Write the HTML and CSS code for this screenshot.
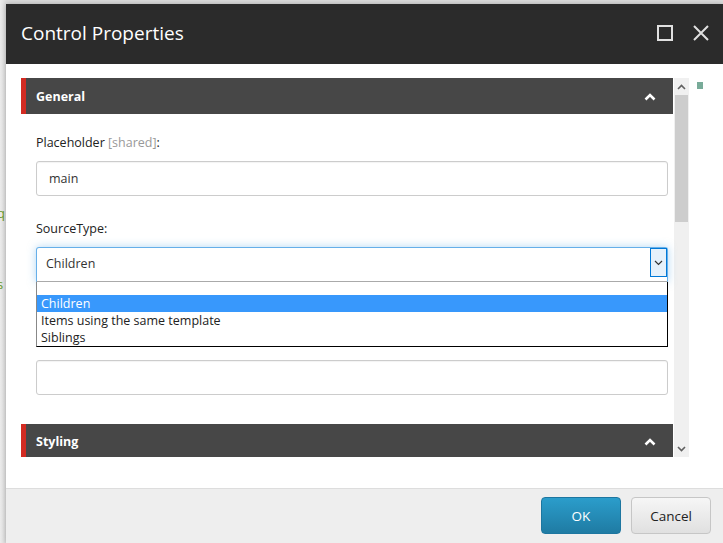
FILE: index.html
```html
<!DOCTYPE html>
<html>
<head>
<meta charset="utf-8">
<title>Control Properties</title>
<link rel="stylesheet" href="styles.css">
</head>
<body>
<div class="backdrop">
  <span class="bg-frag frag-q">q</span>
  <span class="bg-frag frag-s">s</span>
</div>
<div class="dialog">
  <div class="header">
    <div class="title">Control Properties</div>
    <div class="header-icons">
      <svg class="hicon" width="16" height="16" viewBox="0 0 16 16"><rect x="1" y="1" width="14" height="14" fill="none" stroke="#e0e0e0" stroke-width="2"/></svg>
      <svg class="hicon" width="18" height="18" viewBox="0 0 18 18"><path d="M2 2 L16 16 M16 2 L2 16" stroke="#e0e0e0" stroke-width="2" fill="none"/></svg>
    </div>
  </div>
  <div class="body">
    <div class="scroller">
      <div class="content">
        <div class="section-head">
          <span>General</span>
          <svg width="12" height="8" viewBox="0 0 12 8"><path d="M1.5 6.5 L6 2 L10.5 6.5" stroke="#fff" stroke-width="2.6" fill="none"/></svg>
        </div>
        <div class="fields">
          <div class="field">
            <div class="label">Placeholder <span class="muted">[shared]</span>:</div>
            <div class="input">main</div>
          </div>
          <div class="field">
            <div class="label">SourceType:</div>
            <div class="select-wrap">
              <div class="select">
                <span>Children</span>
                <span class="select-btn">
                  <svg width="9" height="6" viewBox="0 0 9 6"><path d="M1 1 L4.5 4.5 L8 1" stroke="#333" stroke-width="1.2" fill="none"/></svg>
                </span>
              </div>
              <div class="options">
                <div class="opt empty"></div>
                <div class="opt sel">Children</div>
                <div class="opt">Items using the same template</div>
                <div class="opt">Siblings</div>
              </div>
            </div>
          </div>
          <div class="field field-gap">
            <div class="label label-hidden">Data Source <span class="sep">|</span> <span class="link">Build query</span> <span class="sep">|</span> <span class="link">Edit query</span> <span class="sep">|</span></div>
            <div class="input"></div>
          </div>
        </div>
        <div class="section-head section-styling">
          <span>Styling</span>
          <svg width="12" height="8" viewBox="0 0 12 8"><path d="M1.5 6.5 L6 2 L10.5 6.5" stroke="#fff" stroke-width="2.6" fill="none"/></svg>
        </div>
      </div>
      <div class="scrollbar">
        <div class="sb-btn">
          <svg width="9" height="6" viewBox="0 0 9 6"><path d="M1 5 L4.5 1.5 L8 5" stroke="#606060" stroke-width="1.6" fill="none"/></svg>
        </div>
        <div class="sb-thumb"></div>
        <div class="sb-track"></div>
        <div class="sb-btn">
          <svg width="9" height="6" viewBox="0 0 9 6"><path d="M1 1 L4.5 4.5 L8 1" stroke="#606060" stroke-width="1.6" fill="none"/></svg>
        </div>
      </div>
    </div>
    <div class="status-dot"></div>
  </div>
  <div class="footer">
    <button class="btn btn-ok">OK</button>
    <button class="btn btn-cancel">Cancel</button>
  </div>
</div>
</body>
</html>
```

FILE: styles.css
```css
html, body {
  margin: 0;
  padding: 0;
}
body {
  width: 723px;
  height: 543px;
  overflow: hidden;
  background: #e4e4e4;
  font-family: "Open Sans", "Liberation Sans", sans-serif;
  position: relative;
}
.backdrop {
  position: absolute;
  left: 0;
  top: 0;
  width: 723px;
  height: 543px;
  background: linear-gradient(to right, #ececec 0, #dcdcdc 6px);
}
.bg-frag {
  position: absolute;
  font-size: 13px;
  color: #6a9a2a;
  line-height: 16px;
}
.frag-q { left: -3px; top: 205px; }
.frag-s { left: -3px; top: 276px; }

.dialog {
  position: absolute;
  left: 6px;
  top: 4px;
  width: 717px;
  height: 539px;
  display: flex;
  flex-direction: column;
  background: #fff;
  box-shadow: 0 0 5px rgba(0,0,0,0.25);
}
.header {
  height: 60px;
  background: #2b2b2b;
  display: flex;
  align-items: center;
  justify-content: space-between;
  padding: 0 13px 0 15px;
  flex: none;
}
.title {
  color: #fff;
  font-size: 19px;
  margin-top: -2px;
}
.header-icons {
  display: flex;
  align-items: center;
  gap: 19px;
  margin-top: -2px;
}
.hicon { display: block; }

.body {
  flex: 1;
  background: #fff;
  padding: 14px 0 0 15px;
  position: relative;
}
.scroller {
  display: flex;
  height: 379px;
  overflow: hidden;
  width: 668px;
}
.content {
  width: 652px;
  flex: none;
}
.section-head {
  height: 36px;
  background: #474747;
  border-left: 5px solid #d22b22;
  display: flex;
  align-items: center;
  justify-content: space-between;
  padding: 0 17px 0 10px;
  color: #fff;
  font-weight: bold;
  font-size: 12.5px;
  box-sizing: border-box;
  flex: none;
}
.section-head svg { display: block; margin-top: 1px; }
.section-styling {
  margin-top: 29px;
  height: 35px;
}
.fields {
  padding: 20px 5px 0 15px;
}
.field {
  margin-bottom: 24px;
}
.field:last-child { margin-bottom: 0; }
.field-gap { margin-top: 48px; }
.label {
  font-size: 12.5px;
  color: #222;
  line-height: 18px;
  margin-bottom: 9px;
  white-space: nowrap;
}
.label-hidden { margin-bottom: 12px; }
.muted { color: #999; }
.sep { color: #bbb; }
.link { color: #2a7ab8; }
.input {
  height: 35px;
  box-sizing: border-box;
  border: 1px solid #cccccc;
  border-radius: 3px;
  box-shadow: inset 0 1px 1px rgba(0,0,0,0.05);
  padding: 0 12px;
  font-size: 12.5px;
  color: #333;
  line-height: 33px;
}
.select-wrap {
  position: relative;
}
.select {
  height: 35px;
  box-sizing: border-box;
  border: 1px solid #66afe9;
  border-radius: 3px 3px 0 0;
  border-bottom-color: #aaa;
  box-shadow: 0 0 8px rgba(102,175,233,0.5);
  display: flex;
  align-items: center;
  justify-content: space-between;
  padding: 0 0 0 9px;
  font-size: 12.5px;
  color: #333;
}
.select > span:first-child { margin-top: -2px; }
.select-btn {
  width: 17px;
  height: 29px;
  box-sizing: border-box;
  border: 1px solid #0078d7;
  background: #e5f1fb;
  display: flex;
  align-items: center;
  justify-content: center;
  align-self: flex-start;
}
.select-btn svg { display: block; }
.options {
  position: absolute;
  left: 0;
  right: 0;
  top: 35px;
  background: #fff;
  border: 1px solid #000;
  border-left-color: #888;
  border-top: none;
  z-index: 2;
  font-size: 12.5px;
  color: #222;
}
.opt {
  height: 17px;
  line-height: 17px;
  padding-left: 4px;
  white-space: nowrap;
}
.opt.empty { height: 13px; }
.opt.sel {
  background: #3898fc;
  color: #fff;
}

.scrollbar {
  width: 15px;
  margin-left: 1px;
  background: #f0f0f0;
  display: flex;
  flex-direction: column;
  flex: none;
}
.sb-btn {
  height: 17px;
  display: flex;
  align-items: center;
  justify-content: center;
  flex: none;
}
.sb-btn svg { display: block; }
.sb-thumb {
  height: 127px;
  background: #cdcdcd;
  margin: 0 1px;
  flex: none;
}
.sb-track { flex: 1; }

.status-dot {
  position: absolute;
  left: 691px;
  top: 18px;
  width: 6px;
  height: 7px;
  background: #78ab99;
}

.footer {
  height: 55px;
  flex: none;
  background: #eeeeee;
  border-top: 1px solid #dddddd;
  box-sizing: border-box;
  display: flex;
  justify-content: flex-end;
  align-items: flex-start;
  gap: 10px;
  padding: 8px 12px 0 0;
}
.btn {
  width: 80px;
  height: 37px;
  border-radius: 4px;
  font-family: "Open Sans", "Liberation Sans", sans-serif;
  font-size: 13.5px;
  cursor: pointer;
}
.btn-ok {
  background: linear-gradient(#2b9dcb, #1f7ba3);
  border: 1px solid #1d76a0;
  color: #fff;
}
.btn-cancel {
  background: linear-gradient(#f6f6f6, #e0e0e0);
  border: 1px solid #c6c6c6;
  color: #222;
}
```
